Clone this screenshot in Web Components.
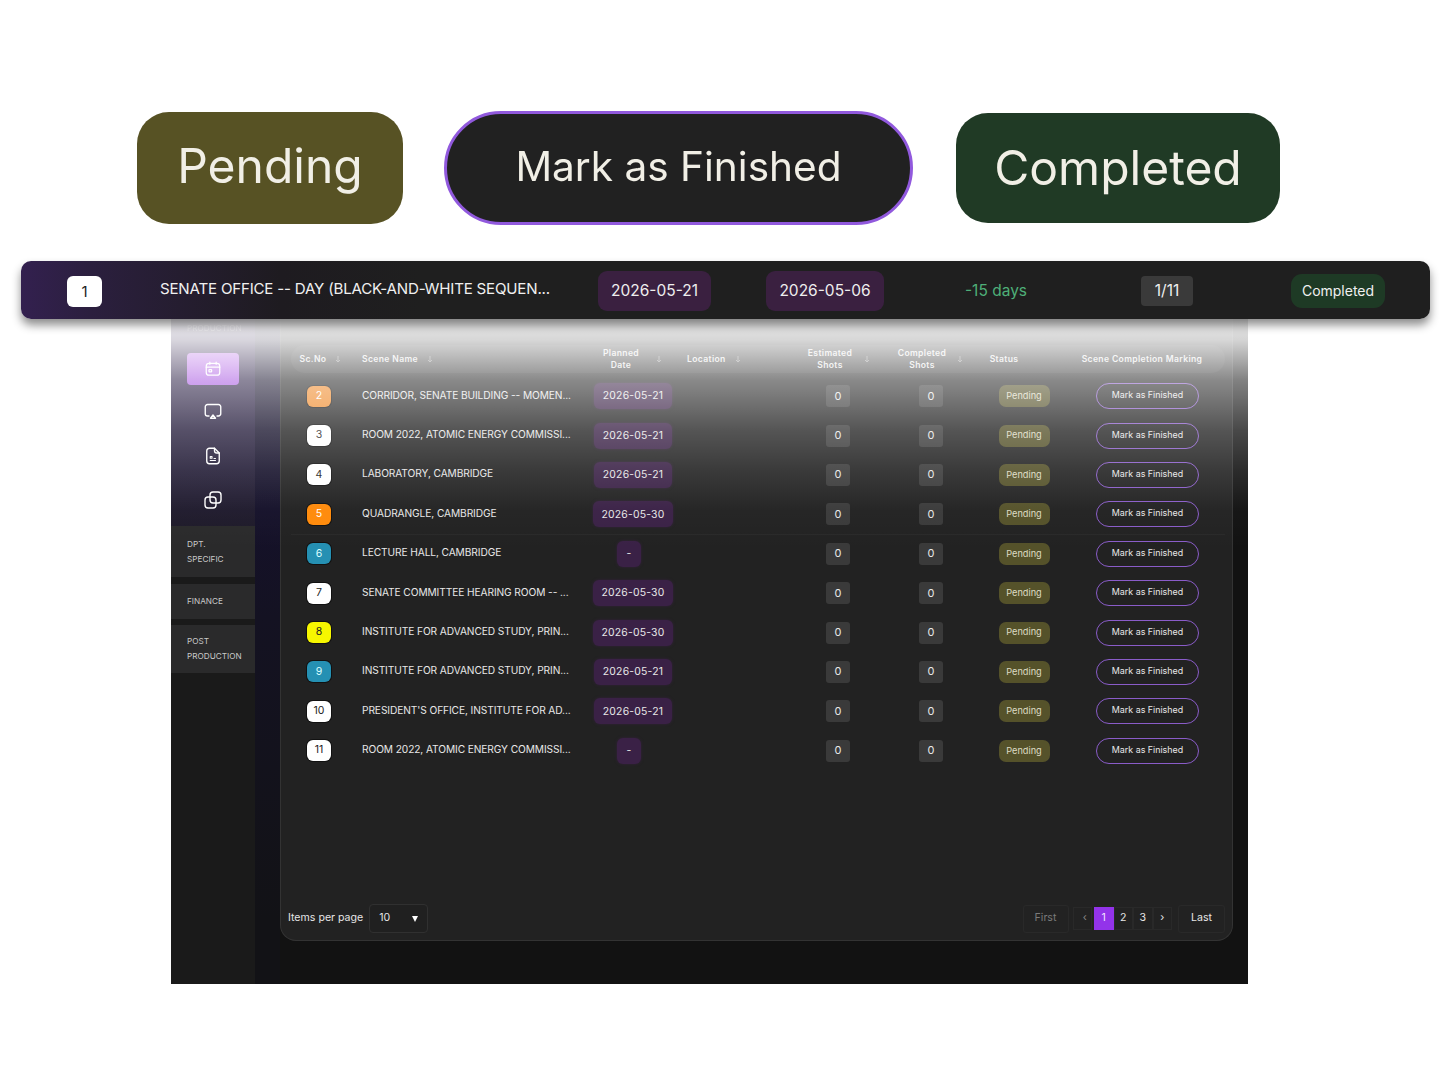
<!DOCTYPE html>
<html>
<head>
<meta charset="utf-8">
<title>Scene completion</title>
<style>
  html,body{margin:0;background:#fff;}
  body{font-family:Inter,"Noto Sans",sans-serif;color:#eee;}
</style>
</head>
<body>
<showcase-page></showcase-page>
<script>
const FONT = 'Inter,"Noto Sans",sans-serif';

class BigBadge extends HTMLElement{
    constructor(){
        super();
        this.attachShadow({mode:'open'});
        this.shadowRoot.innerHTML = `
        <style>
        :host{display:flex;align-items:center;justify-content:center;box-sizing:border-box;
            font:400 var(--fs,44px)/1 ${FONT};color:#f1efe6;background:var(--bg);width:var(--w);height:var(--h);
            border-radius:var(--r);padding-bottom:var(--pb,0);}
        span{filter:blur(.6px);}
        </style>
        <span><slot></slot></span>`;
    }
}
customElements.define('big-badge',BigBadge);

class StatusStrip extends HTMLElement{
    constructor(){
        super();
        this.attachShadow({mode:'open'});
        this.shadowRoot.innerHTML = `
        <style>
        :host{display:grid;grid-template-columns:46px 35px 58px 438px 113px 55px 118px 257px 52px 98px 94px;
            align-items:center;box-sizing:border-box;height:58px;width:1409px;margin-left:21px;border-radius:10px;padding-top:2px;
            background:linear-gradient(90deg,#33204f 0,#2b1f3e 70px,#1e1b20 260px,#1f1f1f 400px);
            box-shadow:0 6px 10px rgba(0,0,0,.45);font:400 15.5px/1 ${FONT};color:#f0f0f0;position:relative;z-index:2;}
        .no{grid-column:2;height:31px;border-radius:6px;background:#fff;color:#222;display:flex;align-items:center;justify-content:center;font-size:15px;}
        .name{grid-column:4;font-size:15.1px;letter-spacing:-.2px;padding-bottom:5px;white-space:nowrap;}
        .date{height:40px;border-radius:9px;background:#3a2040;display:flex;align-items:center;justify-content:center;color:#eee;}
        .d1{grid-column:5;}
        .d2{grid-column:7;}
        .diff{grid-column:8;text-align:center;color:#4eaf78;padding-right:33px;}
        .count{grid-column:9;height:30px;background:#3a3a3a;border-radius:4px;display:flex;align-items:center;justify-content:center;}
        .done{grid-column:11;height:34px;background:#1e3a25;border-radius:11px;display:flex;align-items:center;justify-content:center;font-size:14px;}
        </style>
        <div class="no">1</div>
        <div class="name">SENATE OFFICE -- DAY (BLACK-AND-WHITE SEQUEN...</div>
        <div class="date d1">2026-05-21</div>
        <div class="date d2">2026-05-06</div>
        <div class="diff">-15 days</div>
        <div class="count">1/11</div>
        <div class="done">Completed</div>`;
    }
}
customElements.define('status-strip',StatusStrip);

class SideNav extends HTMLElement{
    constructor(){
        super();
        this.attachShadow({mode:'open'});
        this.shadowRoot.innerHTML = `
        <style>
        :host{display:flex;flex-direction:column;width:84px;box-sizing:border-box;font:400 8.2px/14.5px ${FONT};color:#c9c9c9;
            background:linear-gradient(180deg,#2a1c4a 0,#221c36 150px,#1e1a2a 205px,#1a1a1a 260px);}
        .faint{height:34px;padding:2px 0 0 16px;opacity:.5;box-sizing:border-box;}
        .tile{height:32px;margin:0 16px;border-radius:4px;display:flex;align-items:center;justify-content:center;}
        .tile.on{background:linear-gradient(180deg,#bb6fe8,#a555e0);}
        .tile + .tile{margin-top:12.5px;}
        .tile.on + .tile{margin-top:10px;}
        svg{width:18px;height:18px;fill:none;stroke:#fff;stroke-width:1.1;stroke-linecap:round;stroke-linejoin:round;}
        .big svg{width:20px;height:20px;}
        nav{margin-top:10px;display:flex;flex-direction:column;gap:7px;}
        .m{background:#2a2a2b;padding:11px 16px;}
        .m.one{padding:10px 16px;}
        .m.low{padding:9.5px 16px;margin-top:-1px;}
        </style>
        <div class="faint">PRODUCTION</div>
        <div class="tile on"><svg viewBox="0 0 16 16"><rect x="2" y="3" width="12" height="10.5" rx="2.5"/><path d="M2 6.4h12M5.2 1.8v2M10.8 1.8v2"/><rect x="4.4" y="8.6" width="2.4" height="2" rx=".5"/></svg></div>
        <div class="tile big"><svg viewBox="0 0 16 16"><path d="M4.8 12H3.6A1.8 1.8 0 0 1 1.8 10.2V4.6A1.8 1.8 0 0 1 3.6 2.8h8.8a1.8 1.8 0 0 1 1.8 1.8v5.6a1.8 1.8 0 0 1-1.8 1.8h-1.2"/><path d="M8 11.2l2 2.6H6z"/></svg></div>
        <div class="tile big"><svg viewBox="0 0 16 16"><path d="M9.2 1.8H5.2a2.2 2.2 0 0 0-2.2 2.2v8a2.2 2.2 0 0 0 2.2 2.2h5.6a2.2 2.2 0 0 0 2.2-2.2V5.6z"/><path d="M9.2 1.8v2a1.8 1.8 0 0 0 1.8 1.8h2"/><path d="M5.8 8.4h1.4v1.4H5.8zM5.8 11.6h4.2M8.8 10h1.2" stroke-width=".9"/></svg></div>
        <div class="tile big"><svg viewBox="0 0 16 16"><rect x="5.6" y="1.6" width="8.8" height="8.8" rx="2.4"/><rect x="1.6" y="5.6" width="8.8" height="8.8" rx="2.4"/></svg></div>
        <nav>
          <div class="m">DPT.<br>SPECIFIC</div>
          <div class="m one">FINANCE</div>
          <div class="m low">POST<br>PRODUCTION</div>
        </nav>`;
    }
}
customElements.define('side-nav',SideNav);

const COLS = 'grid-template-columns:56px 235px 102px 106px 96px 90px 96px 150px;';

class SceneHead extends HTMLElement{
    constructor(){
        super();
        this.attachShadow({mode:'open'});
        const arrow = '<svg viewBox="0 0 8 8"><path d="M4 1v6M2 5l2 2 2-2"/></svg>';
        this.shadowRoot.innerHTML = `
        <style>
        :host{display:grid;${COLS}align-items:center;height:28px;margin:26px 7px 4px 0;border-radius:14px;
            background:rgba(255,255,255,.05);font:600 8.6px/12px ${FONT};color:#e4e4e4;letter-spacing:.35px;}
        div{display:flex;align-items:center;justify-content:center;text-align:center;}
        div.l{justify-content:flex-start;gap:8px;text-align:left;}
        div.s{gap:8px;padding-left:4px;}
        .nm{padding-left:15px;}
        .loc{padding-left:3px;gap:9px;}
        .pl{gap:16px;}
        .es{gap:11px;padding-left:3px;}
        .co{gap:10px;}
        svg{width:8px;height:8px;fill:none;stroke:#888;stroke-width:.9;flex:none;}
        .pad{padding-right:40px;}
        .mk{padding-right:10px;}
        </style>
        <div class="s">Sc.No ${arrow}</div>
        <div class="l nm">Scene Name ${arrow}</div>
        <div class="pl">Planned<br>Date ${arrow}</div>
        <div class="l loc">Location ${arrow}</div>
        <div class="es">Estimated<br>Shots ${arrow}</div>
        <div class="co">Completed<br>Shots ${arrow}</div>
        <div class="pad">Status</div>
        <div class="mk">Scene Completion Marking</div>`;
    }
}
customElements.define('scene-head',SceneHead);

class SceneRow extends HTMLElement{
    constructor(){
        super();
        this.attachShadow({mode:'open'});
    }
    connectedCallback(){
        const no=this.getAttribute('no'), date=this.getAttribute('date');
        const bg=this.getAttribute('tone')||'#fff', fg=this.getAttribute('ink')||'#222';
        this.shadowRoot.innerHTML = `
        <style>
        :host{display:grid;${COLS}align-items:center;height:39.4px;font:400 10.2px/1 ${FONT};color:#e8e8e8;border-bottom:1px solid transparent;box-sizing:border-box;margin-right:7px;}
        :host([no="5"]){border-bottom-color:rgba(255,255,255,.035);}
        .no{justify-self:center;width:24px;height:21px;border-radius:6px;display:flex;align-items:center;justify-content:center;background:${bg};color:${fg};box-shadow:0 0 0 1px #111;font-size:10.5px;}
        .name{padding-left:15px;white-space:nowrap;overflow:hidden;letter-spacing:-.1px;padding-bottom:3px;}
        .date{justify-self:center;height:26px;padding:1px 8.5px 0;box-sizing:border-box;border-radius:6px;background:#3a2146;display:flex;align-items:center;justify-content:center;font-size:10.4px;letter-spacing:.2px;box-shadow:0 0 3px rgba(58,33,70,.8);}
        .date.none{width:24px;padding:0;margin-right:8px;}
        .z{grid-column:5;justify-self:center;width:24px;height:22px;border-radius:3px;background:#3a3a3a;display:flex;align-items:center;justify-content:center;font-size:11px;}
        .z.b{grid-column:6;}
        .st{justify-self:center;width:51px;height:22px;padding-bottom:1px;box-sizing:border-box;border-radius:7px;background:#55522a;display:flex;align-items:center;justify-content:center;font-size:9.2px;color:#dedcc4;}
        .mk{justify-self:center;width:103px;height:26px;margin-left:1px;padding-bottom:1px;box-sizing:border-box;border:1px solid #8a5cc9;border-radius:13px;display:flex;align-items:center;justify-content:center;font-size:8.9px;}
        </style>
        <div class="no">${no}</div>
        <div class="name"><slot></slot></div>
        <div class="date${date==='-'?' none':''}">${date}</div>
        <div></div>
        <div class="z">0</div>
        <div class="z b">0</div>
        <div class="st">Pending</div>
        <div class="mk">Mark as Finished</div>`;
    }
}
customElements.define('scene-row',SceneRow);

class PageBar extends HTMLElement{
    constructor(){
        super();
        this.attachShadow({mode:'open'});
        this.shadowRoot.innerHTML = `
        <style>
        :host{display:flex;align-items:center;justify-content:space-between;margin-top:auto;padding:0 7px 7px 7px;font:400 10.6px/1 ${FONT};color:#e6e6e6;}
        .l,.r{display:flex;align-items:center;}
        .sel{margin-left:6px;width:59px;height:29px;box-sizing:border-box;border:1px solid #303030;border-radius:4px;display:flex;align-items:center;justify-content:space-between;padding:0 9px 0 9px;background:#202020;}
        .sel i{width:0;height:0;border-left:3.5px solid transparent;border-right:3.5px solid transparent;border-top:6px solid #fff;}
        .b{height:28px;box-sizing:border-box;border:1px solid #292929;display:flex;align-items:center;justify-content:center;}
        .first{width:46px;color:#7a7a7a;margin-right:1px;border-radius:3px;}
        .n{width:19.5px;height:23px;}
        .c{color:#888;}
        .on{background:#9333ea;border-color:#9333ea;color:#f2e6ff;}
        .last{width:47px;margin-left:6px;border-radius:3px;}
        .g{display:flex;margin-left:3px;}
        </style>
        <div class="l">Items per page<div class="sel"><span>10</span><i></i></div></div>
        <div class="r">
          <div class="b first">First</div>
          <div class="g">
            <div class="b n c" style="margin-right:2px;padding-left:5px">‹</div>
            <div class="b n on">1</div>
            <div class="b n">2</div>
            <div class="b n">3</div>
            <div class="b n">›</div>
          </div>
          <div class="b last">Last</div>
        </div>`;
    }
}
customElements.define('page-bar',PageBar);

class ShowcasePage extends HTMLElement{
    constructor(){
        super();
        this.attachShadow({mode:'open'});
        const rows = [
          [2,'CORRIDOR, SENATE BUILDING -- MOMEN...','2026-05-21','#ef8b2c','#fff'],
          [3,'ROOM 2022, ATOMIC ENERGY COMMISSI...','2026-05-21'],
          [4,'LABORATORY, CAMBRIDGE','2026-05-21'],
          [5,'QUADRANGLE, CAMBRIDGE','2026-05-30','#ff8a0a','#fff'],
          [6,'LECTURE HALL, CAMBRIDGE','-','#2590b3','#dff'],
          [7,'SENATE COMMITTEE HEARING ROOM -- ...','2026-05-30'],
          [8,'INSTITUTE FOR ADVANCED STUDY, PRIN...','2026-05-30','#f7f700','#222'],
          [9,'INSTITUTE FOR ADVANCED STUDY, PRIN...','2026-05-21','#2590b3','#dff'],
          [10,"PRESIDENT'S OFFICE, INSTITUTE FOR AD...",'2026-05-21'],
          [11,'ROOM 2022, ATOMIC ENERGY COMMISSI...','-']
        ].map(r=>`<scene-row no="${r[0]}" date="${r[2]}"${r[3]?` tone="${r[3]}" ink="${r[4]}"`:''}>${r[1]}</scene-row>`).join('');
        this.shadowRoot.innerHTML = `
        <style>
        :host{display:block;width:1450px;height:1080px;overflow:hidden;background:#fff;}
        .top{display:flex;padding:111px 0 0 137px;height:114px;align-items:center;}
        .dash{position:relative;display:flex;width:1077px;height:665px;margin-left:171px;background:#121212;overflow:hidden;}
        .gap{width:25px;background:linear-gradient(180deg,#1a1530 0,#15112a 190px,#141222 300px,#121216 600px);flex:none;}
        .panel{width:953px;height:622px;box-sizing:border-box;background:#222;border:1px solid #333;border-top:0;border-radius:0 0 16px 16px;display:flex;flex-direction:column;padding-left:10px;}
        .veil{position:absolute;left:0;top:0;right:0;height:230px;pointer-events:none;
            background:linear-gradient(180deg,rgba(255,255,255,.9) 0,rgba(255,255,255,.82) 21px,rgba(255,255,255,.47) 61px,rgba(255,255,255,.23) 111px,rgba(255,255,255,.11) 151px,rgba(255,255,255,.02) 191px,rgba(255,255,255,0) 230px);}
        .foot{margin:auto 0 0 -10px;}
        </style>
        <div class="top">
          <big-badge style="--bg:#575224;--w:266px;--h:112px;--r:32px;--fs:48px;--pb:4px">Pending</big-badge>
          <big-badge style="--bg:#212121;--w:469px;--h:114px;--r:57px;--fs:40.6px;--pb:1px;margin-left:41px;border:3px solid #9159dd">Mark as Finished</big-badge>
          <big-badge style="--bg:#203a25;--w:324px;--h:110px;--r:32px;--fs:48px;margin-left:43px">Completed</big-badge>
        </div>
        <status-strip style="margin-top:36px"></status-strip>
        <div class="dash">
          <side-nav></side-nav>
          <div class="gap"></div>
          <div class="panel">
            <scene-head></scene-head>
            ${rows}
            <page-bar class="foot"></page-bar>
          </div>
          <div class="veil"></div>
        </div>`;
    }
}
customElements.define('showcase-page',ShowcasePage);
</script>
</body>
</html>
